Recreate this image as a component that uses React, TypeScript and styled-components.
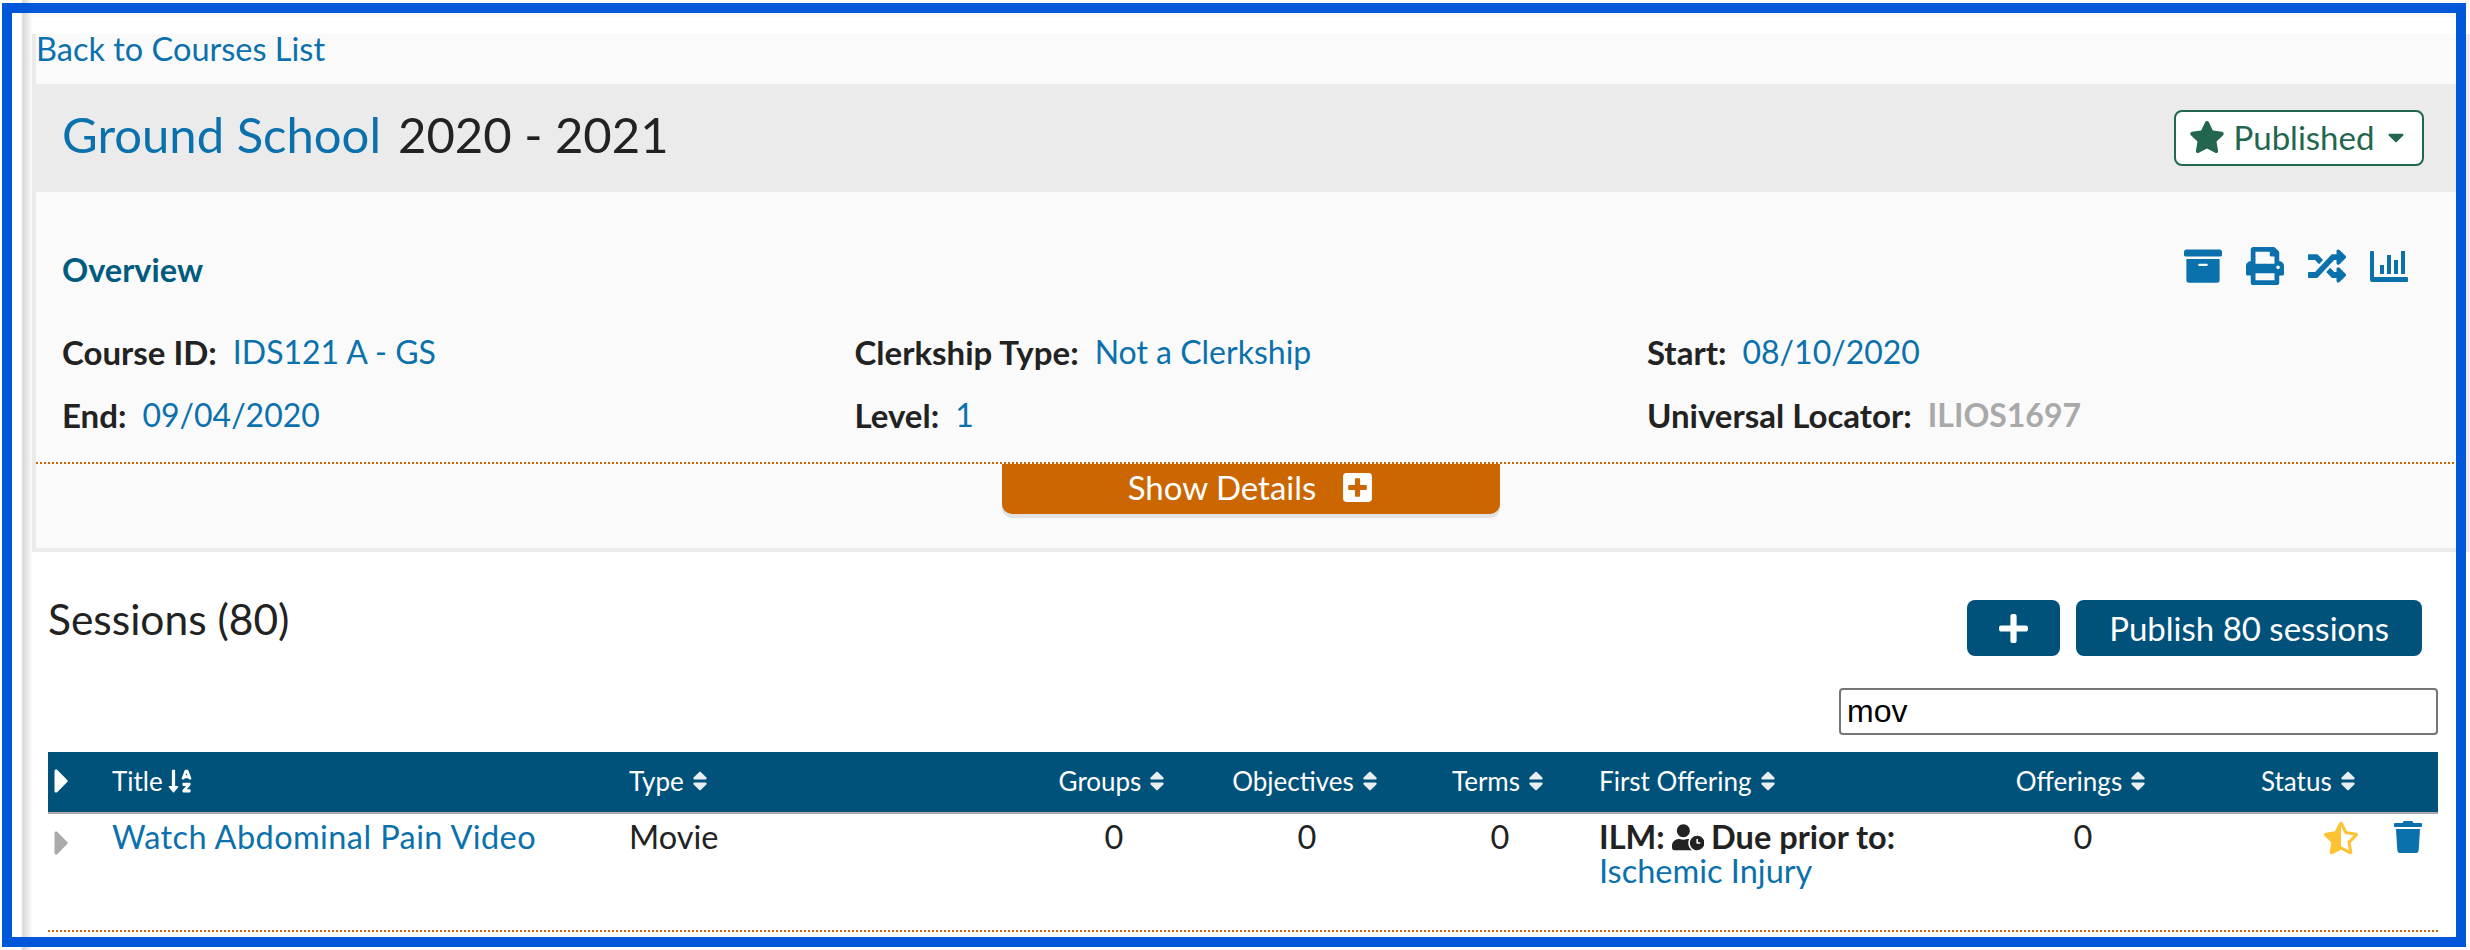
import React from 'react';
import styled, { createGlobalStyle } from 'styled-components';
import {
  FaArchive,
  FaCaretDown,
  FaCaretRight,
  FaPlus,
  FaPlusSquare,
  FaPrint,
  FaRandom,
  FaSort,
  FaSortAlphaDown,
  FaStar,
  FaStarHalfAlt,
  FaTrash,
  FaUserClock,
} from 'react-icons/fa';

const GlobalStyle = createGlobalStyle`
  html, body {
    margin: 0;
    padding: 0;
    background: #fff;
  }
  body {
    font-family: Lato, "Noto Sans", sans-serif;
    color: #222;
    overflow: hidden;
  }
`;

const Page = styled.div`
  position: relative;
  width: 2470px;
  height: 950px;
  display: flex;
  overflow: hidden;
`;

const Frame = styled.div`
  position: absolute;
  left: 2px;
  top: 3px;
  width: 2444px;
  height: 924px;
  border: 10px solid #0057d9;
  pointer-events: none;
`;

const Rail = styled.div`
  flex: 0 0 32px;
  background: linear-gradient(90deg, #fff 0, #fff 21px, #d9d9d9 23px, #f6f6f6 31px, #fff 32px);
`;

const Main = styled.main`
  flex: 1;
  min-width: 0;
  padding-top: 34px;
  background: linear-gradient(#fafafa 17px, #fff 17px);
`;

const Panel = styled.section`
  background: #fafafa;
  border-left: 4px solid #ebebeb;
  border-right: 4px solid #ebebeb;
  border-bottom: 4px solid #ebebeb;
  height: 518px;
  box-sizing: border-box;
`;

const BackLink = styled.a`
  display: block;
  height: 50px;
  line-height: 30px;
  padding-left: 0;
  font-size: 32.5px;
  color: #0b71ad;
`;

const TitleBar = styled.header`
  height: 108px;
  background: #ebebeb;
  display: flex;
  align-items: center;
  justify-content: space-between;
  padding: 0 42px 0 26px;
`;

const CourseTitle = styled.h1`
  margin: -9px 0 0;
  font-size: 49px;
  font-weight: 400;
  display: flex;
  gap: 17px;
`;

const TitleLink = styled.a`
  color: #0b71ad;
`;

const PublishedButton = styled.button`
  width: 250px;
  height: 56px;
  box-sizing: border-box;
  background: #fff;
  border: 2px solid #236650;
  border-radius: 8px;
  color: #236650;
  font-family: inherit;
  font-size: 33px;
  display: flex;
  align-items: center;
  justify-content: center;
  gap: 9px;
  padding: 0 0 2px;
`;

const Overview = styled.div`
  padding: 53px 26px 16px;
`;

const OverviewHead = styled.div`
  display: flex;
  justify-content: space-between;
  align-items: center;
  height: 48px;
  padding-right: 32px;
`;

const OverviewTitle = styled.h2`
  margin: 0;
  font-size: 32.5px;
  font-weight: 700;
  color: #005b7f;
`;

const Tools = styled.div`
  display: flex;
  align-items: center;
  gap: 24px;
  margin-top: -6px;
  color: #0b71ad;
  font-size: 38px;
  line-height: 0;
`;

const InfoGrid = styled.div`
  display: grid;
  grid-template-columns: repeat(3, 792.5px);
  grid-auto-rows: 63px;
  margin-top: 27px;
`;

const Info = styled.div`
  display: flex;
  align-items: center;
  gap: 16px;
  font-size: 32px;
`;

const Label = styled.strong`
  font-size: 33px;
  font-weight: 700;
`;

const Value = styled.a<{ $muted?: boolean }>`
  color: ${(p) => (p.$muted ? '#a9a9a9' : '#0b71ad')};
  font-weight: ${(p) => (p.$muted ? 700 : 400)};
`;

const DottedRule = styled.div`
  height: 2px;
  background-image: linear-gradient(90deg, #cc6600 50%, transparent 50%);
  background-size: 4px 2px;
`;

const DetailsRow = styled.div`
  display: flex;
  justify-content: center;
`;

const ShowDetails = styled.button`
  width: 498px;
  height: 50px;
  padding: 0 0 4px;
  background: #cc6600;
  border: 0;
  border-radius: 0 0 10px 10px;
  box-shadow: 0 4px 0 #e2e2e2;
  color: #fff;
  font-family: inherit;
  font-size: 33px;
  display: flex;
  align-items: center;
  justify-content: center;
  gap: 25px;
`;

const Sessions = styled.section`
  padding: 0 32px 0 16px;
`;

const SessionsHead = styled.div`
  display: flex;
  justify-content: space-between;
  padding: 48px 16px 0 0;
  height: 56px;
`;

const SessionsTitle = styled.h2`
  margin: -7px 0 0;
  font-size: 42.5px;
  font-weight: 400;
`;

const Actions = styled.div`
  display: flex;
  gap: 16px;
`;

const ActionButton = styled.button`
  height: 56px;
  padding: 0 33px;
  background: #00527a;
  color: #fff;
  border: 0;
  border-radius: 8px;
  font-family: inherit;
  font-size: 33px;
  display: flex;
  align-items: center;
`;

const AddButton = styled(ActionButton)`
  padding: 0 30px;
`;

const FilterRow = styled.div`
  display: flex;
  justify-content: flex-end;
  margin-top: 32px;
`;

const Filter = styled.input`
  width: 599px;
  height: 47px;
  box-sizing: border-box;
  border: 2px solid #767676;
  border-radius: 4px;
  padding: 0 6px;
  font-family: "Liberation Sans", Arial, sans-serif;
  font-size: 32px;
  color: #000;
  background: #fff;
`;

const columns = '64px 517px 386px 198px 188px 198px 368px 232px 239px';

const HeaderRow = styled.div`
  display: grid;
  grid-template-columns: ${columns};
  align-items: center;
  height: 58px;
  padding-bottom: 2px;
  margin-top: 17px;
  background: #00527a;
  border-bottom: 2px solid #aaa;
  color: #fff;
  font-size: 26px;
`;

const HeadCell = styled.div<{ $center?: boolean; $inset?: number }>`
  display: flex;
  align-items: center;
  gap: 4px;
  justify-content: ${(p) => (p.$center ? 'center' : 'flex-start')};
  padding-left: ${(p) => p.$inset ?? 0}px;
`;

const SortIcon = styled(FaSort)`
  font-size: 24px;
  color: #e8eef2;
`;

const Toggle = styled(FaCaretRight)<{ $muted?: boolean }>`
  font-size: 40px;
  margin-left: -6px;
  color: ${(p) => (p.$muted ? '#aaa' : '#fff')};
`;

const BodyRow = styled.div`
  display: grid;
  grid-template-columns: ${columns};
  height: 116px;
  box-sizing: border-box;
  font-size: 32.5px;
  line-height: 34px;
`;

const Cell = styled.div<{ $center?: boolean }>`
  padding-top: 6px;
  text-align: ${(p) => (p.$center ? 'center' : 'left')};
`;

const ToggleCell = styled.div`
  padding-top: 9px;
`;

const RowLink = styled.a`
  color: #0b71ad;
`;

const SessionLink = styled(RowLink)`
  letter-spacing: 0.4px;
`;

const OfferingHead = styled.strong`
  display: flex;
  align-items: center;
  gap: 7px;
  font-weight: 700;
`;

const RowActions = styled.div`
  display: flex;
  justify-content: flex-end;
  align-items: flex-start;
  gap: 34px;
  padding: 7px 14px 0 0;
  font-size: 34px;
  line-height: 0;
`;

const HalfStar = styled(FaStarHalfAlt)`
  color: #ffc233;
`;

const Trash = styled(FaTrash)`
  color: #0b71ad;
  font-size: 32px;
`;

const ChartIcon = () => (
  <svg width="38" height="32" viewBox="0 0 38 32" fill="currentColor">
    <path d="M0 2a1 1 0 0 1 1-1h2a1 1 0 0 1 1 1v25h33a1 1 0 0 1 1 1v3a1 1 0 0 1-1 1H2a2 2 0 0 1-2-2z" />
    <rect x="10" y="15" width="4" height="9" />
    <rect x="17" y="5" width="4" height="19" />
    <rect x="24" y="10" width="4" height="14" />
    <rect x="31" y="1" width="4" height="23" />
  </svg>
);

const App: React.FC = () => {
  return (
    <Page>
      <GlobalStyle />
      <Rail />
      <Main>
        <Panel>
          <BackLink>Back to Courses List</BackLink>
          <TitleBar>
            <CourseTitle>
              <TitleLink>Ground School</TitleLink>
              <span>2020 - 2021</span>
            </CourseTitle>
            <PublishedButton>
              <FaStar size={36} />
              Published
              <FaCaretDown size={26} />
            </PublishedButton>
          </TitleBar>
          <Overview>
            <OverviewHead>
              <OverviewTitle>Overview</OverviewTitle>
              <Tools>
                <FaArchive />
                <FaPrint />
                <FaRandom />
                <ChartIcon />
              </Tools>
            </OverviewHead>
            <InfoGrid>
              <Info>
                <Label>Course ID:</Label>
                <Value>IDS121 A - GS</Value>
              </Info>
              <Info>
                <Label>Clerkship Type:</Label>
                <Value>Not a Clerkship</Value>
              </Info>
              <Info>
                <Label>Start:</Label>
                <Value>08/10/2020</Value>
              </Info>
              <Info>
                <Label>End:</Label>
                <Value>09/04/2020</Value>
              </Info>
              <Info>
                <Label>Level:</Label>
                <Value>1</Value>
              </Info>
              <Info>
                <Label>Universal Locator:</Label>
                <Value $muted>ILIOS1697</Value>
              </Info>
            </InfoGrid>
          </Overview>
          <DottedRule />
          <DetailsRow>
            <ShowDetails>
              Show Details
              <FaPlusSquare />
            </ShowDetails>
          </DetailsRow>
        </Panel>
        <Sessions>
          <SessionsHead>
            <SessionsTitle>Sessions (80)</SessionsTitle>
            <Actions>
              <AddButton>
                <FaPlus />
              </AddButton>
              <ActionButton>Publish 80 sessions</ActionButton>
            </Actions>
          </SessionsHead>
          <FilterRow>
            <Filter defaultValue="mov" />
          </FilterRow>
          <HeaderRow>
            <HeadCell>
              <Toggle />
            </HeadCell>
            <HeadCell>
              Title <FaSortAlphaDown />
            </HeadCell>
            <HeadCell>
              Type <SortIcon />
            </HeadCell>
            <HeadCell $center>
              Groups <SortIcon />
            </HeadCell>
            <HeadCell $center>
              Objectives <SortIcon />
            </HeadCell>
            <HeadCell $center>
              Terms <SortIcon />
            </HeadCell>
            <HeadCell>
              First Offering <SortIcon />
            </HeadCell>
            <HeadCell $center>
              Offerings <SortIcon />
            </HeadCell>
            <HeadCell $inset={62}>
              Status <SortIcon />
            </HeadCell>
          </HeaderRow>
          <BodyRow>
            <ToggleCell>
              <Toggle $muted />
            </ToggleCell>
            <Cell>
              <SessionLink>Watch Abdominal Pain Video</SessionLink>
            </Cell>
            <Cell>Movie</Cell>
            <Cell $center>0</Cell>
            <Cell $center>0</Cell>
            <Cell $center>0</Cell>
            <Cell>
              <OfferingHead>
                ILM: <FaUserClock /> Due prior to:
              </OfferingHead>
              <RowLink>Ischemic Injury</RowLink>
            </Cell>
            <Cell $center>0</Cell>
            <RowActions>
              <HalfStar />
              <Trash />
            </RowActions>
          </BodyRow>
          <DottedRule />
        </Sessions>
      </Main>
      <Frame />
    </Page>
  );
};

export default App;
